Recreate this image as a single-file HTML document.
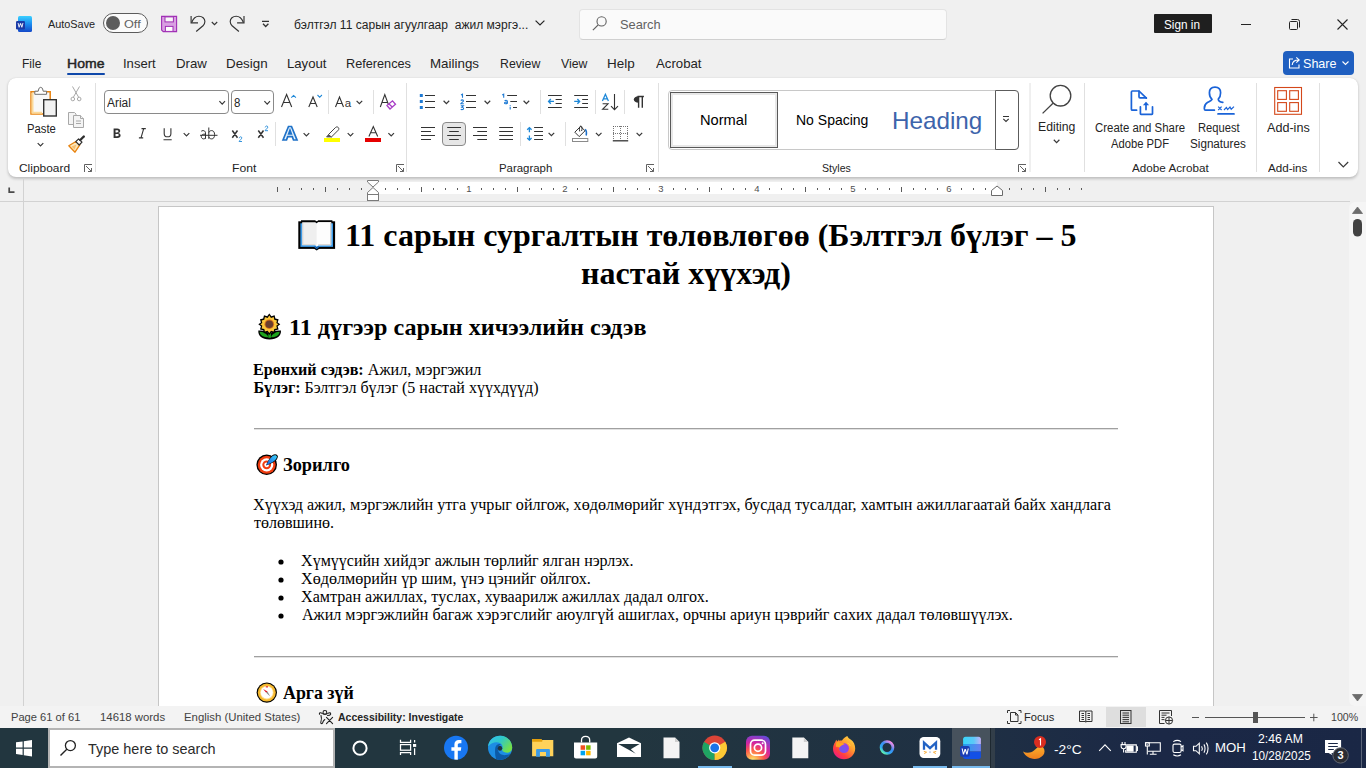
<!DOCTYPE html>
<html><head><meta charset="utf-8">
<style>
*{box-sizing:border-box;margin:0;padding:0}
html,body{width:1366px;height:768px;overflow:hidden;background:#f0f0f0;font-family:"Liberation Sans",sans-serif;color:#242424;position:relative}
.a{position:absolute}
.t{position:absolute;white-space:pre;line-height:1;transform-origin:0 0}
svg{position:absolute;overflow:visible}
.d{position:absolute;white-space:pre;line-height:1;font-family:"Liberation Serif",serif;color:#000}

</style></head><body>

<!-- titlebar -->
<!-- word icon -->
<svg style="left:16px;top:16px" width="16" height="16" viewBox="0 0 16 16">
  <defs><linearGradient id="wg" x1="0" y1="0" x2="0" y2="1"><stop offset="0" stop-color="#3bd0ff"/><stop offset="0.5" stop-color="#1a8cf0"/><stop offset="1" stop-color="#1448c8"/></linearGradient></defs>
  <rect x="2" y="0" width="14" height="16" rx="1.5" fill="url(#wg)"/>
  <rect x="0" y="5" width="9" height="8.5" rx="1.2" fill="#1b3aa6"/>
  <path d="M1.6 7L2.7 11.6H3.5L4.5 8.6L5.5 11.6H6.3L7.4 7H6.5L5.9 10L5 7.2H4L3.1 10L2.5 7Z" fill="#fff"/>
</svg>
<!-- autosave toggle -->
<div class="a" style="left:103px;top:13px;width:45px;height:20px;border:1.2px solid #5c5c5c;border-radius:10px;background:#fbfbfb"></div>
<div class="a" style="left:106px;top:16px;width:14px;height:14px;border-radius:7px;background:#5c5c5c"></div>
<!-- save -->
<svg style="left:0;top:0" width="1366" height="768" viewBox="0 0 1366 768">
  <path d="M161.6 16.4H176.6V31.6H163.2L161.6 30Z" fill="#d9a0e2" stroke="#a02fb5" stroke-width="1.1"/>
  <rect x="165" y="16.9" width="8.4" height="5" fill="#f8f8f8" stroke="#a02fb5" stroke-width="1"/>
  <rect x="165.4" y="26.4" width="7.6" height="5" fill="#fff" stroke="#a02fb5" stroke-width="1"/>
  <g fill="none" stroke="#333" stroke-width="1.15">
   <path d="M191.1 16V22.8H198"/>
   <path d="M191.8 22.2C193.2 18.6 195.8 16.2 198.9 16.2C202.3 16.2 204.9 18.6 204.9 21.6C204.9 23.2 204.3 24.5 203 25.8L196.2 31.5"/>
   <path d="M211.8 22L214.5 24.6L217.2 22"/>
   <path d="M244 16V22.8H237.1"/>
   <path d="M243.3 22.2C241.9 18.6 239.3 16.2 236.2 16.2C232.8 16.2 230.2 18.6 230.2 21.6C230.2 23.2 230.8 24.5 232.1 25.8L238.9 31.5"/>
   <path d="M262 21.4H269M263 23.7L265.7 26.5L268.4 23.7" stroke-width="1.25"/>
  </g>
</svg>
<!-- title chevron -->
<svg style="left:535px;top:20px" width="10" height="6" viewBox="0 0 10 6"><path d="M0.6 0.6L5 5L9.4 0.6" fill="none" stroke="#242424" stroke-width="1.2"/></svg>
<!-- search box -->
<div class="a" style="left:579px;top:9px;width:368px;height:31px;background:#fafafa;border:1px solid #e3e3e3;border-bottom-color:#d0d0d0;border-radius:4px"></div>
<svg style="left:592px;top:16px" width="15" height="15" viewBox="0 0 15 15"><circle cx="9.6" cy="5.4" r="4.6" fill="none" stroke="#5f5f5f" stroke-width="1.1"/><path d="M6.2 8.8L0.9 14.1" stroke="#5f5f5f" stroke-width="1.2"/></svg>
<!-- sign in -->
<div class="a" style="left:1154px;top:14px;width:58px;height:19px;background:#1f1f1f;border-radius:1px"></div>
<!-- window controls -->
<div class="a" style="left:1241px;top:24px;width:10px;height:1px;background:#242424"></div>
<svg style="left:1289px;top:19px" width="11" height="11" viewBox="0 0 11 11"><rect x="0.5" y="2.5" width="8" height="8" rx="1" fill="none" stroke="#242424"/><path d="M2.5 0.5H8.5Q10.5 0.5 10.5 2.5V8.5" fill="none" stroke="#242424"/></svg>
<svg style="left:1337px;top:19px" width="11" height="11" viewBox="0 0 11 11"><path d="M0.5 0.5L10.5 10.5M10.5 0.5L0.5 10.5" stroke="#242424" stroke-width="1.1"/></svg>
<!-- home underline -->
<div class="a" style="left:67px;top:73px;width:38px;height:2px;background:#0f48aa;border-radius:1px"></div>
<!-- share button -->
<div class="a" style="left:1283px;top:51px;width:71px;height:24px;background:#1f5fc0;border-radius:4px"></div>
<svg style="left:1288px;top:56px" width="14" height="13" viewBox="0 0 14 13"><path d="M5 3H1.5V12H11V8.5" fill="none" stroke="#fff" stroke-width="1.1"/><path d="M4.2 9C4.5 5.8 7 4 10.5 4M8.3 1.3L11.2 4L8.3 6.7" fill="none" stroke="#fff" stroke-width="1.1"/></svg>
<svg style="left:1342px;top:61px" width="7" height="5" viewBox="0 0 7 5"><path d="M0.5 0.5L3.5 3.5L6.5 0.5" fill="none" stroke="#fff" stroke-width="1.1"/></svg>

<!-- ribbon -->
<div class="a" style="left:8px;top:78px;width:1350px;height:99px;background:#fff;border-radius:8px;box-shadow:0 1.5px 3px rgba(0,0,0,0.2),0 0 1px rgba(0,0,0,0.1)"></div>
<!-- font boxes -->
<div class="a" style="left:104px;top:90px;width:125px;height:24px;border:1px solid #8a8a8a;border-radius:4px;background:#fff"></div>
<div class="a" style="left:231px;top:90px;width:43px;height:24px;border:1px solid #8a8a8a;border-radius:4px;background:#fff"></div>
<!-- styles gallery -->
<div class="a" style="left:668px;top:90px;width:351px;height:60px;border:1px solid #c8c8c8;border-radius:4px;background:#fff"></div>
<div class="a" style="left:670px;top:92px;width:108px;height:56px;border:1px solid #595959;background:#fff"></div>
<div class="a" style="left:671px;top:93px;width:106px;height:54px;border:2px solid #e8e8e8"></div>
<div class="a" style="left:995px;top:90px;width:24px;height:60px;border:1px solid #5c5c5c;border-radius:0 4px 4px 0;background:#fff"></div>
<!-- center align selected -->
<div class="a" style="left:442px;top:122px;width:24px;height:24px;border:1px solid #8a8a8a;border-radius:4px;background:#e6e6e6"></div>
<svg style="left:0;top:0" width="1366" height="768" viewBox="0 0 1366 768">
<g fill="none" stroke-linecap="butt">
 <!-- group separators -->
 <g stroke="#e0e0e0" stroke-width="1">
  <path d="M95.5 83V172M406.5 83V172M658.5 83V172M1030 83V172M1084.5 83V172M1256.5 83V172M1319.5 83V172"/>
  <path d="M328.5 90V114M373.5 90V114M275.5 122V146M540.5 90V114M595.5 90V114M624.5 90V114M520.5 122V146M565.5 122V146"/>
 </g>
 <!-- dialog launchers -->
 <g stroke="#616161" stroke-width="1">
  <path d="M84.5 172V164.5H92M86 166L91.5 171.5M91.5 168V171.5H88"/>
  <path d="M396.5 172V164.5H404M398 166L403.5 171.5M403.5 168V171.5H400"/>
  <path d="M646.5 172V164.5H654M648 166L653.5 171.5M653.5 168V171.5H650"/>
  <path d="M1018.5 172V164.5H1026M1020 166L1025.5 171.5M1025.5 168V171.5H1022"/>
 </g>
 <!-- chevrons (small) -->
 <g stroke="#3a3a3a" stroke-width="1.2">
  <path d="M37.70 143.05L40.50 145.95L43.30 143.05M219.40 101.15L222.20 104.05L225.00 101.15M264.40 101.15L267.20 104.05L270.00 101.15M356.60 100.85L359.40 103.75L362.20 100.85M183.70 133.05L186.50 135.95L189.30 133.05M303.60 133.05L306.40 135.95L309.20 133.05M347.70 133.05L350.50 135.95L353.30 133.05M388.40 133.05L391.20 135.95L394.00 133.05M443.60 100.75L446.40 103.65L449.20 100.75M484.60 100.75L487.40 103.65L490.20 100.75M523.60 100.75L526.40 103.65L529.20 100.75M548.60 132.85L551.40 135.75L554.20 132.85M595.90 132.85L598.70 135.75L601.50 132.85M636.60 132.85L639.40 135.75L642.20 132.85M1053.80 139.75L1056.60 142.65L1059.40 139.75"/>
  <path d="M1338.5 162L1343.3 167L1348.2 162" stroke-width="1.2"/>
 </g>
 <!-- paste icon -->
 <path d="M31 91.8H50.2V114H31Z" stroke="#e8830f" stroke-width="1.5" fill="#f8f8f8"/>
 <path d="M32.5 93V112.7H42" stroke="#fbd99a" stroke-width="2"/>
 <path d="M34.8 94.3V91.2H38.2Q38.5 87.3 40.7 87.3Q42.9 87.3 43.2 91.2H46.6V94.3Z" stroke="#6e6e6e" stroke-width="1" fill="#fff"/>
 <rect x="43.7" y="99.7" width="12.6" height="16.3" stroke="#333" stroke-width="1.4" fill="#f2f2f2"/>
 <!-- scissors (disabled) -->
 <g stroke="#a8a8a8" stroke-width="1">
  <path d="M72.5 86.5L78.5 97M79.5 86.5L73.5 97"/>
  <circle cx="72.8" cy="99" r="1.8"/><circle cx="79.2" cy="99" r="1.8"/>
 </g>
 <!-- copy (disabled) -->
 <g stroke="#a8a8a8" stroke-width="1" fill="#f4f4f4">
  <path d="M68.5 124.5V112.5H74.5L76 114V124.5Z"/>
  <path d="M73.5 127.5V115.5H80.5L83.5 118.5V127.5Z"/>
  <path d="M76 121H81M76 123.5H81M80.5 115.5V118.5H83.5"/>
 </g>
 <!-- format painter -->
 <path d="M68.8 145.8L76.3 141.2L79.8 144.8L75 152.2Z" stroke="#e8830f" stroke-width="1.3" fill="#fde6b8" stroke-linejoin="round"/>
 <path d="M71.5 146.5L76.5 144.5L74.6 149.5Z" fill="#f8c070" stroke="none"/>
 <path d="M75.8 141.6L78.6 138.8L82 142.2L79.2 145Z" stroke="#2e2e2e" stroke-width="1.2" fill="#fff" stroke-linejoin="round"/>
 <path d="M80.3 140L83.8 136.5" stroke="#2e2e2e" stroke-width="2.4" stroke-linecap="round"/>
 <!-- grow / shrink font -->
 <g stroke="#333" stroke-width="1.1">
  <path d="M281.5 107L286.6 94.5L291.7 107M283.4 102.5H289.8"/>
  <path d="M308.8 107L313 97L317.2 107M310.3 103.5H315.7"/>
  <path d="M335.5 107L339.5 97L343.5 107M337 103.5H342"/>
  <path d="M380.3 107L384.8 94.5L389.3 107M382 102.5H387.5"/>
 </g>
 <path d="M291.3 97.6L293.6 95.4L295.9 97.6M317.5 95L319.7 97.3L321.9 95" stroke="#1e88d8" stroke-width="1.1"/>
 <text x="344.8" y="107" font-family="Liberation Sans" font-size="11.5" fill="#333" stroke="none">a</text>
 <path d="M387 105.5L392.5 100.8L395.5 104.2L390 109Z M389 104L392.5 107.3" stroke="#a83ec6" stroke-width="1.3" fill="#fff"/>
 <!-- B I U ab x2 x^2 -->
 <path d="M113.6 128.6H117.2C119.4 128.6 120.2 129.8 120.2 131C120.2 132.2 119.3 132.9 118 133.1C119.6 133.3 120.6 134.2 120.6 135.6C120.6 137.1 119.4 137.9 117.4 137.9H113.6Z M115.5 130.2V132.5H116.9C118 132.5 118.4 132 118.4 131.3C118.4 130.6 118 130.2 116.9 130.2Z M115.5 134V136.3H117.1C118.3 136.3 118.8 135.8 118.8 135.1C118.8 134.4 118.3 134 117.1 134Z" fill="#333" stroke="none" fill-rule="evenodd"/>
 <path d="M141.5 128.6H145.8M138.9 137.9H143.2M143.7 128.6L141 137.9" stroke="#333" stroke-width="1.1"/>
 <path d="M164.2 128.3V133.4C164.2 135.7 165.5 136.8 167.5 136.8C169.5 136.8 170.9 135.7 170.9 133.4V128.3M163.5 139.7H171.7" stroke="#333" stroke-width="1.1"/>
 <g stroke="#333" stroke-width="1">
  <path d="M205.5 132.8C205.5 131.3 204.2 130.6 203 130.6C202 130.6 201.4 131 201.2 131.4M205.5 132.8V138.8M205.4 134.2C203 134 201.3 134.6 201.3 136.5C201.3 138.3 202.8 138.9 203.6 138.9C204.6 138.9 205.3 138.4 205.5 137.3"/>
  <path d="M208.8 127.5V138.8M208.9 132.5C209.4 131.2 210.3 130.6 211.6 130.6C213.4 130.6 214.6 132 214.6 134.7C214.6 137.5 213.4 138.9 211.6 138.9C210.3 138.9 209.3 138.2 208.9 137"/>
  <path d="M200 135.3H217.5"/>
 </g>
 <path d="M232.3 130.5L237.5 137.8M237.5 130.5L232.3 137.8M258.3 130.5L263.5 137.8M263.5 130.5L258.3 137.8" stroke="#333" stroke-width="1.5"/>
 <path d="M239.2 138.2C239.4 137.2 240.1 136.8 240.6 136.8C241.3 136.8 241.8 137.3 241.8 137.9C241.8 139 239.5 140.3 239.1 141.5H242M265.2 127.4C265.4 126.4 266.1 126 266.6 126C267.3 126 267.8 126.5 267.8 127.1C267.8 128.2 265.5 129.5 265.1 130.7H268" stroke="#1e88d8" stroke-width="0.9"/>
 <!-- text effects A -->
 <path d="M283 140L288.5 126.5H291.5L297 140H293.5L292.3 136.7H287.7L286.5 140Z M288.7 133.8H291.3L290 130.2Z" stroke="#1f72c8" stroke-width="1.7" fill="#e4f0fb"/>
 <!-- highlighter -->
 <path d="M328.5 134.5L335.5 127.5C336.3 126.7 337.6 126.7 338.3 127.5C339 128.2 339 129.4 338.3 130.1L331.3 137.1Z" stroke="#444" stroke-width="1" fill="#fff"/>
 <path d="M328.5 134.5L326.5 137H330.8L331.3 137.1Z" fill="#555" stroke="#555" stroke-width="0.8"/>
 <rect x="324" y="138" width="16" height="4" fill="#ffff00" stroke="none"/>
 <!-- font color -->
 <path d="M368.9 136.5L373.3 126.5L377.7 136.5M370.5 132.8H376.1" stroke="#333" stroke-width="1.1"/>
 <rect x="365" y="138" width="16" height="4" fill="#e60000" stroke="none"/>
 <!-- bullets -->
 <g fill="#1e7ad4" stroke="none">
  <rect x="419.8" y="94" width="3" height="3"/><rect x="419.8" y="100" width="3" height="3"/><rect x="419.8" y="106" width="3" height="3"/>
 </g>
 <path d="M425 95.5H435M425 101.5H435M425 107.5H435" stroke="#333" stroke-width="1"/>
 <g fill="none" stroke="#1e7ad4" stroke-width="1.1">
  <path d="M461 95L462.5 94.2V97.8"/>
  <path d="M460.8 100.6C461.2 100 461.8 99.9 462.3 99.9C463 99.9 463.5 100.3 463.5 100.9C463.5 101.8 461 102.8 460.8 103.7H463.8"/>
  <path d="M460.8 105.8H463.3L461.8 107.3C463 107.3 463.6 107.8 463.6 108.4C463.6 109.1 462.9 109.6 462 109.6C461.5 109.6 461 109.4 460.8 109.1"/>
  <path d="M502.2 95L503.7 94.2V97.8"/>
  <path d="M504.7 101C505 100.4 505.5 100.2 506.1 100.2C506.9 100.2 507.4 100.6 507.4 101.4V103.8M507.3 102C505.5 101.9 504.5 102.3 504.5 103C504.5 103.5 504.9 103.8 505.5 103.8C506.3 103.8 507 103.4 507.3 102.9"/>
  <path d="M510.2 106.8V109.6M510.2 105V105.8"/>
 </g>
 <path d="M466 95.5H476M466 101.5H476M466 107.5H476" stroke="#333" stroke-width="1"/>
 <path d="M507.2 95.5H517M510.3 101.5H517M513 107.5H517" stroke="#333" stroke-width="1"/>
 <!-- decrease / increase indent -->
 <path d="M548 95.5H561.8M555.6 99.5H561.8M555.6 103.5H561.8M548 107.5H561.8" stroke="#333" stroke-width="1"/>
 <path d="M550.8 99L548.6 101.4L550.8 103.8M548.8 101.4H554" stroke="#1e88d8" stroke-width="1.4"/>
 <path d="M574.2 95.5H588M582.2 99.5H588M582.2 103.5H588M574.2 107.5H588" stroke="#333" stroke-width="1"/>
 <path d="M574.2 101.4H579.6M577.4 99L579.6 101.4L577.4 103.8" stroke="#1e88d8" stroke-width="1.4"/>
 <!-- sort -->
 <path d="M602.4 101L605.4 94.3L608.4 101M603.4 98.9H607.4" stroke="#1e88d8" stroke-width="1.3" fill="none"/>
 <path d="M602.6 103.8H608L602.6 109.3H608.3" stroke="#333" stroke-width="1.1" fill="none"/>
 <path d="M614.5 94V109.6M611 106.2L614.5 109.7L618 106.2" stroke="#333" stroke-width="1.1" fill="none"/>
 <!-- pilcrow -->
 <path d="M638.6 96.5V107.7M642.3 96.5V107.7M643.9 96.5H637.5" stroke="#333" stroke-width="1.4" fill="none"/>
 <path d="M638.6 96.3V102.7C635.8 102.7 633.8 101.3 633.8 99.5C633.8 97.6 635.6 96.3 638.6 96.3Z" fill="#333" stroke="none"/>
 <!-- align -->
 <g stroke="#333" stroke-width="1">
  <path d="M421 127.5H435M421 131.5H431M421 135.5H435M421 139.5H431"/>
  <path d="M447.2 127.5H461M449.2 131.5H458.8M447.2 135.5H461M449.2 139.5H458.8"/>
  <path d="M473 127.5H487M477.3 131.5H487M473 135.5H487M477.3 139.5H487"/>
  <path d="M499.2 127.5H513M499.2 131.5H513M499.2 135.5H513M499.2 139.5H513"/>
 </g>
 <!-- line spacing -->
 <path d="M534.1 127.5H543M534.1 131.5H543M534.1 135.5H543M534.1 139.5H543" stroke="#333" stroke-width="1"/>
 <path d="M529.4 127.6V132.3M529.4 135.5V140.2M527.2 129.8L529.4 127.6L531.6 129.8M527.2 138L529.4 140.2L531.6 138" stroke="#1e88d8" stroke-width="1.3" fill="none"/>
 <!-- shading -->
 <path d="M574.8 132.2L580.6 126.4L585 130.8L579.2 136.6Z" stroke="#333" stroke-width="1" fill="#fff" stroke-linejoin="round"/>
 <path d="M579.8 131.5C579 129.5 579.4 126 580.8 126C582.2 126 582.4 128.5 581.6 131" stroke="#333" stroke-width="1" fill="none"/>
 <path d="M585.2 129.2C586.3 130.3 586.8 132.5 586.2 135.5" stroke="#1e6fc8" stroke-width="1.5" fill="none"/>
 <rect x="572.5" y="138.5" width="15.3" height="3" stroke="#8a8a8a" stroke-width="1" fill="#fff"/>
 <!-- borders -->
 <g stroke="#555" stroke-width="0.8" stroke-dasharray="1 1">
  <path d="M613 126.5H628M613 133.5H628M613.5 126V140M620.5 126V140M627.5 126V140"/>
 </g>
 <path d="M612.8 140.8H628.2" stroke="#333" stroke-width="1.3"/>
 <!-- styles more button -->
 <path d="M1003 116.5H1009M1003.3 118.8L1006 121.5L1008.7 118.8" stroke="#333" stroke-width="1.1"/>
 <!-- editing magnifier -->
 <circle cx="1060.5" cy="95.7" r="10.3" stroke="#424242" stroke-width="1.3"/>
 <path d="M1053 103.2L1042.6 113.4" stroke="#424242" stroke-width="1.3"/>
 <!-- create and share PDF -->
 <g stroke="#1a63d8" stroke-width="1.7" stroke-linejoin="round" stroke-linecap="round" fill="none">
  <path d="M1136.6 110.2H1132.4C1131.8 110.2 1131.4 109.8 1131.4 109.2V92C1131.4 91.4 1131.8 91 1132.4 91H1139L1146.4 98.2"/>
  <path d="M1139 91.2V96.8C1139 97.4 1139.4 97.8 1140 97.8H1146.2"/>
  <path d="M1140.4 106.8V113.8C1140.4 114.2 1140.6 114.4 1141 114.4H1151.9C1152.3 114.4 1152.5 114.2 1152.5 113.8V106.8"/>
  <path d="M1146 109.6V103.6"/>
 </g>
 <path d="M1142.9 105.2L1146 101.8L1149.1 105.2Z" fill="#1a63d8"/>
 <!-- request signatures -->
 <g stroke="#1a63d8" stroke-width="1.7" stroke-linecap="round" fill="none">
  <path d="M1212 99.3C1210.2 97.9 1209.4 95.5 1209.4 92.8C1209.4 89.3 1211.6 87.1 1215 87.1C1218.4 87.1 1220.6 89.3 1220.6 92.8C1220.6 95.5 1219.9 97.7 1218.3 99.2C1218.4 100.9 1220.5 102.1 1222.8 102.4M1212 99.3C1211.2 101 1208.8 101.8 1207.4 102.6C1205.3 103.8 1204.3 106 1204.3 108.5C1204.3 109.6 1204.8 110.2 1205.6 110.2H1214.4"/>
  <path d="M1218 113.9H1234"/>
 </g>
 <path d="M1218.2 106.6L1221.6 110M1221.6 106.6L1218.2 110M1224 110L1226.4 107.4L1227.6 109.6L1230 107L1231.2 109.2L1234 106.6" stroke="#1a63d8" stroke-width="1.2" fill="none"/>
 <!-- add-ins -->
 <g stroke="#d4481a" stroke-width="1.1">
 <rect x="1274.7" y="87.5" width="26.8" height="26.8"/>
 <rect x="1277.7" y="90.7" width="8.7" height="8.7"/>
 <rect x="1289.7" y="90.7" width="8.7" height="8.7"/>
 <rect x="1277.7" y="102.6" width="8.7" height="8.7"/>
 <rect x="1289.7" y="102.6" width="8.7" height="8.7"/>
 </g>
</g>
</svg>

<!-- ruler -->
<div class="a" style="left:0;top:201px;width:1350px;height:1px;background:#d2d2d2"></div>
<div class="a" style="left:23px;top:178px;width:1px;height:528px;background:#d2d2d2"></div>
<div class="a" style="left:373px;top:182px;width:624px;height:12px;background:#fff"></div>
<svg style="left:0;top:0" width="1366" height="768" viewBox="0 0 1366 768"><path d="M9.2 187.5V192.2H14.5" fill="none" stroke="#4a4a4a" stroke-width="1.7"/>
<path d="M277.5 187V192M289.5 188V190M301.5 188V190M313.5 188V190M325.5 187V192M337.5 188V190M349.5 188V190M361.5 188V190M385.5 188V190M397.5 188V190M409.5 188V190M421.5 187V192M433.5 188V190M445.5 188V190M457.5 188V190M481.5 188V190M493.5 188V190M505.5 188V190M517.5 187V192M529.5 188V190M541.5 188V190M553.5 188V190M577.5 188V190M589.5 188V190M601.5 188V190M613.5 187V192M625.5 188V190M637.5 188V190M649.5 188V190M673.5 188V190M685.5 188V190M697.5 188V190M709.5 187V192M721.5 188V190M733.5 188V190M745.5 188V190M769.5 188V190M781.5 188V190M793.5 188V190M805.5 187V192M817.5 188V190M829.5 188V190M841.5 188V190M865.5 188V190M877.5 188V190M889.5 188V190M901.5 187V192M913.5 188V190M925.5 188V190M937.5 188V190M961.5 188V190M973.5 188V190M985.5 188V190M1009.5 188V190M1021.5 188V190M1033.5 188V190M1045.5 187V192M1057.5 188V190M1069.5 188V190M1081.5 188V190" stroke="#5a5a5a" stroke-width="1" fill="none"/>
<path d="M367.5 180.5H378.5V182L373 187L367.5 182Z" fill="#fff" stroke="#7a7a7a" stroke-width="1"/>
<path d="M373 187.5L378.5 192.5V194.5H367.5V192.5Z" fill="#fff" stroke="#7a7a7a" stroke-width="1"/>
<rect x="367.5" y="194.5" width="11" height="6" fill="#fff" stroke="#7a7a7a" stroke-width="1"/>
<path d="M991.5 195.5V190.5L997 186L1002.5 190.5V195.5Z" fill="#fff" stroke="#6a6a6a" stroke-width="1"/>
<text x="469" y="192" font-family="Liberation Sans" font-size="9.5" fill="#505050" text-anchor="middle">1</text>
<text x="565" y="192" font-family="Liberation Sans" font-size="9.5" fill="#505050" text-anchor="middle">2</text>
<text x="661" y="192" font-family="Liberation Sans" font-size="9.5" fill="#505050" text-anchor="middle">3</text>
<text x="757" y="192" font-family="Liberation Sans" font-size="9.5" fill="#505050" text-anchor="middle">4</text>
<text x="853" y="192" font-family="Liberation Sans" font-size="9.5" fill="#505050" text-anchor="middle">5</text>
<text x="949" y="192" font-family="Liberation Sans" font-size="9.5" fill="#505050" text-anchor="middle">6</text>
</svg>
<!-- doc -->
<!-- page -->
<div class="a" style="left:158px;top:206px;width:1056px;height:500px;background:#fff;border:1px solid #c6c6c6;border-bottom:none"></div>
<!-- scrollbar -->
<div class="a" style="left:1349px;top:202px;width:17px;height:504px;background:#f5f5f5;border-radius:6px 0 0 6px"></div>
<svg style="left:0;top:0" width="1366" height="768" viewBox="0 0 1366 768">
 <path d="M1357.5 207L1362.5 213.5H1352.5Z" fill="#6b6b6b" stroke="#6b6b6b" stroke-width="0.8" stroke-linejoin="round"/>
 <rect x="1353" y="219" width="9" height="17.5" rx="4.5" fill="#424242"/>
 <path d="M1357.5 701L1362.5 694.5H1352.5Z" fill="#6b6b6b" stroke="#6b6b6b" stroke-width="0.8" stroke-linejoin="round"/>
 <!-- horizontal rules -->
 <rect x="254" y="428" width="864" height="1" fill="#a0a0a0"/><rect x="254" y="429" width="864" height="1" fill="#e2e2e2"/>
 <rect x="254" y="656" width="864" height="1" fill="#a0a0a0"/><rect x="254" y="657" width="864" height="1" fill="#e2e2e2"/>
 <!-- bullets -->
 <circle cx="281" cy="562" r="2.6" fill="#000"/>
 <circle cx="281" cy="580" r="2.6" fill="#000"/>
 <circle cx="281" cy="598" r="2.6" fill="#000"/>
 <circle cx="281" cy="616" r="2.6" fill="#000"/>
 <!-- book emoji -->
 <g>
  <rect x="298.3" y="221.3" width="36.8" height="27.6" fill="#000"/>
  <path d="M301 220.2H315.2L316.7 221.8L318.2 220.2H332.4V223H301Z" fill="#000"/>
  <path d="M313 248L316.7 250.4L320.4 248Z" fill="#000"/>
  <rect x="300.4" y="223.3" width="32.6" height="23.6" fill="#3c9be8"/>
  <path d="M302.2 222.3H315.3L316.7 223.6L318.1 222.3H331.2V245.3H318.3L316.7 246.6L315.1 245.3H302.2Z" fill="#efefef"/>
  <path d="M316.7 223.6V246.6L318.3 245.3H331.2V222.3H318.1Z" fill="#fdfdfd"/>
  <path d="M302.4 244.6H315.3M318.2 244.6H331" stroke="#dcd6d0" stroke-width="1"/>
  <path d="M302.8 223V244.5M330.6 223V244.5" stroke="#cfcfcf" stroke-width="1"/>
  <path d="M314.5 246.4L316.7 248.3L318.9 246.4" stroke="#1565b8" stroke-width="1.3" fill="none"/>
 </g>
 <!-- sunflower -->
 <g>
  <path d="M258.3 330.5C258 336 262 339.5 269.5 339.5C277 339.5 281.3 336 281 330.5C276 330 272 331.5 269.5 334C267 331.5 263 330 258.3 330.5Z" fill="#000"/>
  <path d="M259.6 331.8C260 335.5 263.5 337.3 268.2 337.3C267.8 334.8 264.5 332 259.6 331.8Z" fill="#1ca31c"/>
  <path d="M279.7 331.8C279.3 335.5 275.8 337.3 271.1 337.3C271.5 334.8 274.8 332 279.7 331.8Z" fill="#1ca31c"/>
  <rect x="268.3" y="330" width="2.6" height="7.8" fill="#1ca31c"/>
  <polygon id="petal" points="269.3,313.4 271.4,316.2 274.6,315.2 275.4,318.4 278.6,319.2 277.7,322.4 280.3,324.2 277.7,326.3 278.6,329.4 275.4,330.2 274.6,333.3 271.4,332.4 269.3,335 267.2,332.4 264,333.3 263.2,330.2 260,329.4 260.9,326.3 258.3,324.2 260.9,322.4 260,319.2 263.2,318.4 264,315.2 267.2,316.2" fill="#000"/>
  <polygon points="269.3,315.6 271,318 273.7,317.1 274.3,319.8 277,320.4 276.3,323 278.3,324.2 276.3,325.8 277,328.4 274.3,329 273.7,331.6 271,330.8 269.3,333 267.6,330.8 264.9,331.6 264.3,329 261.6,328.4 262.3,325.8 260.3,324.2 262.3,323 261.6,320.4 264.3,319.8 264.9,317.1 267.6,318" fill="#fcc73a"/>
  <circle cx="269.3" cy="324.2" r="4.8" fill="#d8731c"/>
  <circle cx="269.3" cy="324.2" r="3.8" fill="#6b3e2e"/>
 </g>
 <!-- target -->
 <g>
  <circle cx="266.7" cy="464.8" r="10.3" fill="#000"/>
  <circle cx="266.7" cy="464.8" r="9" fill="#f03c10"/>
  <circle cx="266.7" cy="464.8" r="6.6" fill="#fff"/>
  <circle cx="266.7" cy="464.8" r="4.4" fill="#f03c10"/>
  <circle cx="266.7" cy="464.8" r="2.4" fill="#fff"/>
  <defs><linearGradient id="dart" x1="0" y1="1" x2="1" y2="0"><stop offset="0" stop-color="#1a5fd8"/><stop offset="0.55" stop-color="#2a9cf0"/><stop offset="1" stop-color="#3ad6fa"/></linearGradient></defs>
  <path d="M266 465.4C267.5 461.5 269.8 457.5 272.3 455.3C274.5 453.5 277.5 454 277.8 456.3C278 458.5 276.3 460.6 273.8 462.1C271.6 463.4 268.5 464.7 266 465.4Z" fill="#000"/>
  <path d="M266.4 465C268 461.3 270.2 457.8 272.6 456C274.4 454.6 276.7 455 276.9 456.6C277 458.2 275.7 460 273.4 461.4C271.4 462.6 268.6 464.3 266.4 465Z" fill="url(#dart)"/>
 </g>
 <!-- compass -->
 <g>
  <circle cx="266.8" cy="692.6" r="10.2" fill="#000"/>
  <circle cx="266.8" cy="692.6" r="9" fill="#f6b930"/>
  <circle cx="266.8" cy="692.6" r="6.8" fill="#ffdf8c"/>
  <circle cx="266.8" cy="692.6" r="6" fill="#fff"/>
  <path d="M263.1 689L267.5 691.5L266.2 692.8Z" fill="#e01020"/>
  <path d="M266.2 692.8L267.5 691.5L270.3 696.5Z" fill="#8a8a8a"/>
  <rect x="265.8" y="686.3" width="2.2" height="1.1" fill="#e01020"/>
 </g>
</svg>

<!-- status -->
<div class="a" style="left:0;top:706px;width:1366px;height:22px;background:#f3f3f3"></div>
<div class="a" style="left:1106px;top:707px;width:40px;height:20px;background:#dedede"></div>
<svg style="left:0;top:0" width="1366" height="768" viewBox="0 0 1366 768">
 <!-- accessibility -->
 <g fill="none" stroke="#222" stroke-width="1.1" stroke-linecap="round">
  <circle cx="324.9" cy="712.4" r="1.9"/>
  <path d="M319.5 714.2C319 712.8 320.8 712.2 322 713.4C323.5 714.3 326.5 714.3 328 713.4C329.2 712.2 331.2 712.8 330.5 714.5C330.2 715.3 329 715.5 327.5 715.5"/>
  <path d="M321 715.5C321.8 717.5 321.5 720 320.8 722.3C320.5 723.8 322 724 322.5 723C323 721.5 323.5 720.5 324.8 719.5"/>
  <path d="M326.5 717.3L332.6 723.6M332.6 717.3L326.5 723.6"/>
 </g>
 <!-- focus -->
 <g fill="none" stroke="#333" stroke-width="1">
  <path d="M1007.5 713V710.5H1010M1018.5 710.5H1021V713M1021 721V723.5H1018.5M1010 723.5H1007.5V721"/>
  <path d="M1010.5 712.5H1015.5L1018 715V721.5H1010.5Z"/>
  <path d="M1015.5 712.5V715H1018"/>
 </g>
 <!-- read mode -->
 <g fill="none" stroke="#333" stroke-width="1">
  <path d="M1079.5 711V721.5H1085.5L1085.8 722.3L1086.1 721.5H1092V711H1086.1L1085.8 711.8L1085.5 711H1079.5Z"/>
  <path d="M1085.8 711.8V721.5M1081.5 713.5H1084M1081.5 715.5H1084M1081.5 717.5H1084M1081.5 719.5H1084M1087.5 713.5H1090M1087.5 715.5H1090M1087.5 717.5H1090M1087.5 719.5H1090"/>
 </g>
 <!-- print layout -->
 <g fill="none" stroke="#333" stroke-width="1">
  <rect x="1120.5" y="710.5" width="10.5" height="13"/>
  <path d="M1122.5 713H1129M1122.5 715.2H1129M1122.5 717.4H1129M1122.5 719.6H1129M1122.5 721.8H1129"/>
 </g>
 <!-- web layout -->
 <g fill="none" stroke="#333" stroke-width="1">
  <path d="M1164.5 723.5H1159.5V710.5H1171.5V716"/>
  <path d="M1161.5 713H1169.5M1161.5 715.2H1166.5M1161.5 717.4H1164.5M1161.5 719.6H1164.5"/>
  <circle cx="1169" cy="720.5" r="3.6"/>
  <path d="M1165.4 720.5H1172.6M1169 716.9V724.1"/>
 </g>
 <!-- zoom slider -->
 <path d="M1192 717.5H1199M1205 717.5H1305M1310 717.5H1317.6M1313.8 713.7V721.3" stroke="#555" stroke-width="1"/>
 <rect x="1253" y="712" width="5" height="11" fill="#555"/>
</svg>

<!-- taskbar -->
<div class="a" style="left:0;top:728px;width:1366px;height:40px;background:linear-gradient(90deg,#22363f 0%,#22363f 45%,#1f3043 70%,#1b2846 85%,#1a2745 100%)"></div>
<!-- search box -->
<div class="a" style="left:48px;top:728px;width:287px;height:40px;background:#fff;border:2px solid #b4b4b4;border-right-width:2px"></div>
<!-- word highlight -->
<div class="a" style="left:952px;top:728px;width:38px;height:40px;background:#47525d"></div>
<div class="a" style="left:990px;top:728px;width:1px;height:40px;background:#1d2830"></div><div class="a" style="left:991px;top:728px;width:4px;height:40px;background:#323e49"></div>
<!-- underlines -->
<div class="a" style="left:698px;top:766px;width:34px;height:2px;background:#76b9ed"></div>
<div class="a" style="left:913px;top:766px;width:34px;height:2px;background:#76b9ed"></div>
<div class="a" style="left:952px;top:766px;width:38px;height:2px;background:#76b9ed"></div>
<div class="a" style="left:1361px;top:728px;width:1px;height:40px;background:#5a6478"></div>
<svg style="left:0;top:0" width="1366" height="768" viewBox="0 0 1366 768">
 <!-- windows logo -->
 <path d="M16 742.3L22.6 741.4V747.6H16Z M23.8 741.2L32 740V747.6H23.8Z M16 748.8H22.6V755L16 754.1Z M23.8 748.8H32V756.4L23.8 755.2Z" fill="#fff"/>
 <!-- search icon -->
 <circle cx="70.4" cy="745.6" r="5" fill="none" stroke="#222" stroke-width="1.3"/>
 <path d="M66.8 749.2L60.5 755.5" stroke="#222" stroke-width="1.4"/>
 <!-- cortana -->
 <circle cx="360" cy="748.2" r="6.6" fill="none" stroke="#fff" stroke-width="2"/>
 <!-- task view -->
 <g fill="none" stroke="#fff" stroke-width="1.25">
  <path d="M400.5 739.8V742.3H410.6V739.8"/>
  <rect x="400.5" y="744.6" width="10.1" height="5.6"/>
  <path d="M400.5 755.1V752.5H410.6V755.1"/>
  <path d="M414.6 740V742.6M414.6 748.2V755"/>
 </g>
 <rect x="413" y="744" width="3.2" height="2.9" fill="#fff"/>
 <!-- facebook -->
 <circle cx="456" cy="747.7" r="12" fill="#1877f2"/>
 <path d="M457.8 759.7V750.8H460.8L461.3 747.2H457.8V745C457.8 744 458.2 743.2 459.6 743.2H461.4V740.1C461 740 460 739.9 458.8 739.9C456.2 739.9 454.4 741.5 454.4 744.4V747.2H451.4V750.8H454.4V759.6Z" fill="#fff"/>
 <!-- edge -->
 <defs>
  <linearGradient id="edg" x1="0" y1="0" x2="1" y2="1"><stop offset="0" stop-color="#35c1f1"/><stop offset="0.55" stop-color="#1d8fd8"/><stop offset="1" stop-color="#0c59a4"/></linearGradient>
  <linearGradient id="edg2" x1="0" y1="0" x2="1" y2="0.6"><stop offset="0" stop-color="#36c0f2"/><stop offset="0.5" stop-color="#2fc8c8"/><stop offset="1" stop-color="#74e048"/></linearGradient>
  <radialGradient id="ig" cx="0.28" cy="1.05" r="1.25"><stop offset="0" stop-color="#fdf497"/><stop offset="0.12" stop-color="#fdc45a"/><stop offset="0.38" stop-color="#fd5949"/><stop offset="0.6" stop-color="#d6249f"/><stop offset="0.95" stop-color="#5a4ee0"/></radialGradient>
  <linearGradient id="ff" x1="0" y1="0" x2="0" y2="1"><stop offset="0" stop-color="#ffbd4f"/><stop offset="0.5" stop-color="#ff7139"/><stop offset="1" stop-color="#e31587"/></linearGradient>
  <linearGradient id="ring" x1="0.85" y1="0.05" x2="0.15" y2="0.95"><stop offset="0" stop-color="#f48ae6"/><stop offset="0.4" stop-color="#3a8cf2"/><stop offset="0.75" stop-color="#2fa8f0"/><stop offset="1" stop-color="#60f0b0"/></linearGradient>
  <linearGradient id="moon" x1="0" y1="0" x2="0" y2="1"><stop offset="0" stop-color="#fdb62f"/><stop offset="1" stop-color="#f07f1d"/></linearGradient>
  <linearGradient id="wd" x1="0" y1="0" x2="0" y2="1"><stop offset="0" stop-color="#3bd0ff"/><stop offset="0.5" stop-color="#1a8cf0"/><stop offset="1" stop-color="#1448c8"/></linearGradient>
 </defs>
 <circle cx="500.1" cy="747.8" r="12.1" fill="#1d8de4"/>
 <path d="M488.1 746.5C488.6 740.2 493.8 735.7 500.1 735.7C506.8 735.7 512.2 741 512.2 747.6C512.2 750.6 510.4 752.7 507.4 752.7C504.8 752.7 502.8 751.7 502 749.9C503.2 747.8 502.8 744.8 500.3 743.3C497.2 741.5 491.8 742 488.1 746.5Z" fill="url(#edg2)"/>
 <path d="M495.4 747.2C496.3 744.6 498.8 743.5 501 744.3C498.4 745.5 497.4 748.6 498.4 751.6C499.9 755.6 505.4 756.2 510.2 753.6C508.2 757.6 504.2 759.9 500.1 759.9C498 759.9 496.7 759.4 496 758.9C494.9 755 494.8 750.6 495.4 747.2Z" fill="#0c5aa6"/>
 <ellipse cx="500" cy="748.2" rx="2.2" ry="2.5" fill="#1e3440"/>
 <!-- explorer -->
 <path d="M532.1 739.6Q532.1 739 532.7 739H541L542 740H553.3V756.2H532.1Z" fill="#ffd25a"/>
 <path d="M532.1 739.6Q532.1 739 532.7 739H541L542.2 740.2V741.8H532.1Z" fill="#e5a00c"/>
 <path d="M536.1 756.8V750Q536.1 749 537.1 749H548.9Q549.9 749 549.9 750V756.8H546V752H539.9V756.8Z" fill="#3b9be8"/>
 <!-- store -->
 <path d="M574 742.5H597.2V756.5C597.2 757.7 596.5 758.5 595.2 758.5H576C574.7 758.5 574 757.7 574 756.5Z" fill="#fff"/>
 <path d="M581.5 742.5V740.2C581.5 737.8 583.3 736.3 585.6 736.3C587.9 736.3 589.7 737.8 589.7 740.2V742.5" fill="none" stroke="#fff" stroke-width="1.3"/>
 <rect x="580.6" y="745.3" width="4.5" height="4.5" fill="#f25022"/><rect x="586.1" y="745.3" width="4.5" height="4.5" fill="#7fba00"/>
 <rect x="580.6" y="750.8" width="4.5" height="4.5" fill="#00a4ef"/><rect x="586.1" y="750.8" width="4.5" height="4.5" fill="#ffb900"/>
 <!-- mail -->
 <path d="M617 743.3L629 737.6L641 743.3V757H617Z" fill="#fff"/>
 <path d="M618.2 744.1H639.6L630.8 749.2L635.8 753.8L629.5 750.2Z" fill="#22363f"/>
 <!-- files -->
 <path d="M663.5 737.5H675L679.5 742V758.2H663.5Z" fill="#f4f4f4"/>
 <path d="M675 737.5V742H679.5" fill="#cfcfcf"/>
 <path d="M792.3 737.5H803.8L808.3 742V758.2H792.3Z" fill="#f4f4f4"/>
 <path d="M803.8 737.5V742H808.3" fill="#cfcfcf"/>
 <!-- chrome -->
 <circle cx="714.7" cy="747.8" r="12.2" fill="#db4437"/>
 <path d="M714.7 747.8L704.1 741.7A12.2 12.2 0 0 0 714.7 760Z" fill="#1fa463"/>
 <path d="M714.7 747.8L714.7 760A12.2 12.2 0 0 0 725.3 741.7Z" fill="#fcc934"/>
 <path d="M714.7 747.8L704.1 741.7L710 743.3Z" fill="#db4437"/>
 <circle cx="714.7" cy="747.8" r="5.6" fill="#fff"/>
 <circle cx="714.7" cy="747.8" r="4.4" fill="#1a73e8"/>
 <!-- instagram -->
 <rect x="746" y="735.7" width="24" height="24" rx="6" fill="url(#ig)"/>
 <rect x="750.5" y="740.2" width="15" height="15" rx="4.2" fill="none" stroke="#fff" stroke-width="1.7"/>
 <circle cx="758" cy="747.7" r="3.6" fill="none" stroke="#fff" stroke-width="1.7"/>
 <circle cx="762.6" cy="743.2" r="1" fill="#fff"/>
 <!-- firefox -->
 <defs><linearGradient id="ffr" x1="1" y1="0" x2="0.2" y2="1"><stop offset="0" stop-color="#ffe94d"/><stop offset="0.4" stop-color="#ffa02e"/><stop offset="0.75" stop-color="#ff3f3f"/><stop offset="1" stop-color="#f0148a"/></linearGradient>
 <radialGradient id="ffg" cx="0.4" cy="0.6" r="0.7"><stop offset="0" stop-color="#6a5cf0"/><stop offset="1" stop-color="#a03ae8"/></radialGradient></defs>
 <path d="M835.2 742C833.8 744 833 746.3 833 748.8C833 755 838 759.3 844 759.3C850.3 759.3 855.2 754.5 855.2 748.5C855.2 744.5 853.5 741.5 851 739.8C849.5 738.8 848 738 847.3 736C845.5 736.6 843.3 738.5 842 740.5C840.8 740.3 839.6 740.5 838.8 740.8L838.8 739.6L837.4 741.5L836.2 739.8Z" fill="url(#ffr)"/>
 <circle cx="844" cy="748.2" r="4.9" fill="url(#ffg)"/>
 <path d="M836.5 742.2L838.8 741.3L840 743.2C841.8 742.8 843.6 743.2 844.6 744.2C842.4 744.6 840.6 745.8 839.7 747.5C838.2 746.6 837 746.6 836 746.9C835.8 745.2 836 743.5 836.5 742.2Z" fill="#ffa51f"/>
 <path d="M847.5 743.2C849 743.5 850 744.8 850.2 746" stroke="#ffd34a" stroke-width="0.8" fill="none"/>
 <!-- ring app -->
 <circle cx="887" cy="747.5" r="5.9" fill="none" stroke="url(#ring)" stroke-width="2.8"/>
 <!-- M app -->
 <rect x="919.5" y="737" width="20.8" height="21" rx="4.2" fill="#fff"/>
 <path d="M924 749.8V742.6L930 748.2L936 742.6V749.8" fill="none" stroke="#2262c4" stroke-width="2.3" stroke-linejoin="miter"/>
 <path d="M923.8 751.4L926.6 752.2L924.2 753.6M936.2 751.4L933.4 752.2L935.8 753.6" fill="none" stroke="#f6a62a" stroke-width="0.9"/>
 <rect x="929.3" y="751.6" width="1.4" height="0.9" fill="#6a8ad0"/>
 <!-- word taskbar -->
 <defs><linearGradient id="wt1" x1="0" y1="0" x2="1" y2="0"><stop offset="0" stop-color="#38d6fa"/><stop offset="0.6" stop-color="#5cc8f8"/><stop offset="1" stop-color="#c4b0f8"/></linearGradient>
 <linearGradient id="wt2" x1="0" y1="0" x2="1" y2="0"><stop offset="0" stop-color="#1ea0ee"/><stop offset="1" stop-color="#6a80f0"/></linearGradient></defs>
 <path d="M963.1 739.2Q963.1 736.7 965.6 736.7H978.4Q980.9 736.7 980.9 739.2V744H963.1Z" fill="url(#wt1)"/>
 <rect x="963.1" y="744" width="17.8" height="7.5" fill="url(#wt2)"/>
 <path d="M963.1 751.5H980.9V756.5Q980.9 759 978.4 759H965.6Q963.1 759 963.1 756.5Z" fill="#1450e6"/>
 <rect x="960.1" y="746" width="9.7" height="10.7" rx="1.8" fill="#1b3db4"/>
 <path d="M961.6 748.6L962.9 754.6H964L965.2 750.8L966.4 754.6H967.5L968.8 748.6H967.7L966.9 752.5L965.8 748.9H964.6L963.5 752.5L962.7 748.6Z" fill="#fff"/>
 <!-- weather moon -->
 <path d="M1040 744.5C1046 748 1046.5 755 1039 758.2C1032 760.5 1025.5 757 1023 751.5C1026.5 753.5 1031 753 1034 750.5C1037 748 1038.5 746.5 1040 744.5Z" fill="url(#moon)"/>
 <circle cx="1040" cy="742.1" r="6" fill="#d92d20"/>
 <path d="M1039 739.8L1040.5 738.8V745.4" fill="none" stroke="#fff" stroke-width="1.1"/>
 <!-- tray -->
 <g fill="none" stroke="#fff" stroke-width="1.1">
  <path d="M1099.2 750.8L1105 744.8L1110.8 750.8"/>
  <path d="M1122.2 742V744.3M1125 742V744.3M1121.1 744.6H1126.1V746.3C1126.1 747.8 1125 748.8 1123.6 748.8C1122.2 748.8 1121.1 747.8 1121.1 746.3Z M1123.6 748.8V752.6"/>
  <path d="M1126.8 744.9H1136.3V752.3H1125.7V750"/>
  <path d="M1136.3 746.8H1137.4V750.4H1136.3"/>
  <path d="M1145.5 742.7H1160.3V751.3H1148"/>
  <path d="M1153 751.3V754.2M1149.8 754.3H1156.6M1147.3 746V754.6"/>
  <rect x="1145.5" y="742.7" width="3.8" height="3.3"/>
  <path d="M1173 745.6V751C1173 752 1173.6 752.5 1174.5 752.5H1179.6C1180.5 752.5 1181.1 752 1181.1 751V745.6C1181.1 744.6 1180.5 744.1 1179.6 744.1H1174.5C1173.6 744.1 1173 744.6 1173 745.6Z M1181.1 747L1183 745.8V750.8L1181.1 749.6"/>
  <path d="M1173.3 741.6C1175.6 740.2 1178.8 740.2 1181 741.6M1173.3 754.8C1175.6 756.2 1178.8 756.2 1181 754.8"/>
  <path d="M1193.5 746.3H1196L1199.3 743.2V753.8L1196 750.7H1193.5Z"/>
  <path d="M1201.6 746.2C1202.4 747.6 1202.4 749.4 1201.6 750.8M1203.9 744.4C1205.4 746.6 1205.4 750.4 1203.9 752.6M1206.3 742.6C1208.6 745.8 1208.6 751.2 1206.3 754.4"/>
 </g>
 <rect x="1126.4" y="745.5" width="7.2" height="6.2" fill="#fff"/>
 <path d="M1146.3 743.8L1147.4 744.9L1148.5 743.8" stroke="#fff" stroke-width="0.8" fill="none"/>
 <!-- notifications -->
 <path d="M1325 740H1341.1V752.9H1331.5L1332 755L1328.6 752.9H1325Z" fill="#fff"/>
 <path d="M1328.2 743.5H1337.8M1328.2 746.5H1337.8M1328.2 749.5H1333.8" stroke="#1a2745" stroke-width="1.2"/>
 <circle cx="1340.6" cy="755.4" r="7.7" fill="#2a2c32" stroke="#6a6e78" stroke-width="0.9"/>
 <text x="1340.6" y="759.3" font-family="Liberation Sans" font-size="11" font-weight="bold" fill="#fff" text-anchor="middle">3</text>
</svg>

<!-- texts -->
<div class="t" style="left:48.00px;top:19.00px;font-size:11.8px;font-weight:normal;color:#242424;font-family:'Liberation Sans';transform:scaleX(0.9216);">AutoSave</div>
<div class="t" style="left:124.43px;top:19.00px;font-size:11.8px;font-weight:normal;color:#616161;font-family:'Liberation Sans';transform:scaleX(1.0733);">Off</div>
<div class="t" style="left:294.04px;top:19.00px;font-size:12.5px;font-weight:normal;color:#242424;font-family:'Liberation Sans';transform:scaleX(0.9643);">бэлтгэл 11 сарын агуулгаар&nbsp; ажил мэргэ...</div>
<div class="t" style="left:620.05px;top:18.00px;font-size:13.5px;font-weight:normal;color:#616161;font-family:'Liberation Sans';transform:scaleX(0.9512);">Search</div>
<div class="t" style="left:1164.46px;top:19.00px;font-size:12.5px;font-weight:normal;color:#ffffff;font-family:'Liberation Sans';transform:scaleX(0.9405);">Sign in</div>
<div class="t" style="left:21.56px;top:58.00px;font-size:12.8px;font-weight:normal;color:#242424;font-family:'Liberation Sans';transform:scaleX(0.9368);">File</div>
<div class="t" style="left:66.50px;top:58.00px;font-size:12.8px;font-weight:normal;color:#242424;font-family:'Liberation Sans';transform:scaleX(1.0970);-webkit-text-stroke:0.45px #242424;">Home</div>
<div class="t" style="left:122.88px;top:58.00px;font-size:12.8px;font-weight:normal;color:#242424;font-family:'Liberation Sans';transform:scaleX(1.0194);">Insert</div>
<div class="t" style="left:175.97px;top:58.00px;font-size:12.8px;font-weight:normal;color:#242424;font-family:'Liberation Sans';transform:scaleX(1.0345);">Draw</div>
<div class="t" style="left:225.96px;top:58.00px;font-size:12.8px;font-weight:normal;color:#242424;font-family:'Liberation Sans';transform:scaleX(1.0447);">Design</div>
<div class="t" style="left:286.97px;top:58.00px;font-size:12.8px;font-weight:normal;color:#242424;font-family:'Liberation Sans';transform:scaleX(1.0270);">Layout</div>
<div class="t" style="left:346.01px;top:58.00px;font-size:12.8px;font-weight:normal;color:#242424;font-family:'Liberation Sans';transform:scaleX(0.9922);">References</div>
<div class="t" style="left:430.26px;top:58.00px;font-size:12.8px;font-weight:normal;color:#242424;font-family:'Liberation Sans';transform:scaleX(1.0435);">Mailings</div>
<div class="t" style="left:500.34px;top:58.00px;font-size:12.8px;font-weight:normal;color:#242424;font-family:'Liberation Sans';transform:scaleX(0.9610);">Review</div>
<div class="t" style="left:561.00px;top:58.00px;font-size:12.8px;font-weight:normal;color:#242424;font-family:'Liberation Sans';transform:scaleX(0.9571);">View</div>
<div class="t" style="left:606.95px;top:58.00px;font-size:12.8px;font-weight:normal;color:#242424;font-family:'Liberation Sans';transform:scaleX(1.0520);">Help</div>
<div class="t" style="left:656.30px;top:58.00px;font-size:12.8px;font-weight:normal;color:#242424;font-family:'Liberation Sans';transform:scaleX(1.0318);">Acrobat</div>
<div class="t" style="left:1303.32px;top:58.00px;font-size:12.8px;font-weight:normal;color:#ffffff;font-family:'Liberation Sans';transform:scaleX(0.9818);">Share</div>
<div class="t" style="left:26.58px;top:123.00px;font-size:12.3px;font-weight:normal;color:#242424;font-family:'Liberation Sans';transform:scaleX(0.9167);">Paste</div>
<div class="t" style="left:19.46px;top:163.00px;font-size:11.5px;font-weight:normal;color:#242424;font-family:'Liberation Sans';transform:scaleX(1.0375);">Clipboard</div>
<div class="t" style="left:107.30px;top:97.00px;font-size:12.3px;font-weight:normal;color:#242424;font-family:'Liberation Sans';transform:scaleX(0.9708);">Arial</div>
<div class="t" style="left:234.40px;top:97.00px;font-size:12.3px;font-weight:normal;color:#242424;font-family:'Liberation Sans';transform:scaleX(0.9333);">8</div>
<div class="t" style="left:231.64px;top:163.00px;font-size:11.5px;font-weight:normal;color:#242424;font-family:'Liberation Sans';transform:scaleX(1.0591);">Font</div>
<div class="t" style="left:498.81px;top:163.00px;font-size:11.5px;font-weight:normal;color:#242424;font-family:'Liberation Sans';transform:scaleX(0.9923);">Paragraph</div>
<div class="t" style="left:699.79px;top:113.00px;font-size:14.5px;font-weight:normal;color:#000000;font-family:'Liberation Sans';transform:scaleX(1.0111);">Normal</div>
<div class="t" style="left:795.83px;top:113.00px;font-size:14.5px;font-weight:normal;color:#000000;font-family:'Liberation Sans';transform:scaleX(0.9658);">No Spacing</div>
<div class="t" style="left:892.18px;top:109.00px;font-size:24px;font-weight:normal;color:#3d64ab;font-family:'Liberation Sans';transform:scaleX(1.0093);">Heading</div>
<div class="t" style="left:821.78px;top:163.00px;font-size:11.5px;font-weight:normal;color:#242424;font-family:'Liberation Sans';transform:scaleX(0.9200);">Styles</div>
<div class="t" style="left:1037.68px;top:121.00px;font-size:12px;font-weight:normal;color:#242424;font-family:'Liberation Sans';transform:scaleX(1.0200);">Editing</div>
<div class="t" style="left:1094.65px;top:122.00px;font-size:12px;font-weight:normal;color:#242424;font-family:'Liberation Sans';transform:scaleX(0.9505);">Create and Share</div>
<div class="t" style="left:1110.50px;top:138.00px;font-size:12px;font-weight:normal;color:#242424;font-family:'Liberation Sans';transform:scaleX(0.9355);">Adobe PDF</div>
<div class="t" style="left:1197.77px;top:122.00px;font-size:12px;font-weight:normal;color:#242424;font-family:'Liberation Sans';transform:scaleX(0.9318);">Request</div>
<div class="t" style="left:1190.33px;top:138.00px;font-size:12px;font-weight:normal;color:#242424;font-family:'Liberation Sans';transform:scaleX(0.9732);">Signatures</div>
<div class="t" style="left:1132.30px;top:163.00px;font-size:11.5px;font-weight:normal;color:#242424;font-family:'Liberation Sans';transform:scaleX(1.0160);">Adobe Acrobat</div>
<div class="t" style="left:1267.00px;top:122.00px;font-size:12px;font-weight:normal;color:#242424;font-family:'Liberation Sans';transform:scaleX(1.0500);">Add-ins</div>
<div class="t" style="left:1268.40px;top:163.00px;font-size:11.5px;font-weight:normal;color:#242424;font-family:'Liberation Sans';transform:scaleX(1.0103);">Add-ins</div>
<div class="t" style="left:11.43px;top:712.00px;font-size:11.5px;font-weight:normal;color:#424242;font-family:'Liberation Sans';transform:scaleX(0.9686);">Page 61 of 61</div>
<div class="t" style="left:100.01px;top:712.00px;font-size:11.5px;font-weight:normal;color:#424242;font-family:'Liberation Sans';transform:scaleX(0.9891);">14618 words</div>
<div class="t" style="left:183.61px;top:712.00px;font-size:11.5px;font-weight:normal;color:#424242;font-family:'Liberation Sans';transform:scaleX(0.9897);">English (United States)</div>
<div class="t" style="left:337.60px;top:712.00px;font-size:11.5px;font-weight:bold;color:#242424;font-family:'Liberation Sans';transform:scaleX(0.9124);">Accessibility: Investigate</div>
<div class="t" style="left:1023.63px;top:712.00px;font-size:11.5px;font-weight:normal;color:#242424;font-family:'Liberation Sans';transform:scaleX(0.9667);">Focus</div>
<div class="t" style="left:1330.88px;top:712.00px;font-size:11.5px;font-weight:normal;color:#424242;font-family:'Liberation Sans';transform:scaleX(0.9250);">100%</div>
<div class="t" style="left:88.20px;top:741.00px;font-size:15px;font-weight:normal;color:#2b2b2b;font-family:'Liberation Sans';transform:scaleX(0.9629);">Type here to search</div>
<div class="t" style="left:1053.94px;top:743.00px;font-size:13px;font-weight:normal;color:#ffffff;font-family:'Liberation Sans';transform:scaleX(1.0583);">-2°C</div>
<div class="t" style="left:1215.24px;top:742.00px;font-size:12.5px;font-weight:normal;color:#ffffff;font-family:'Liberation Sans';transform:scaleX(1.0556);">МОН</div>
<div class="t" style="left:1257.92px;top:733.00px;font-size:12.5px;font-weight:normal;color:#ffffff;font-family:'Liberation Sans';transform:scaleX(0.9773);">2:46 AM</div>
<div class="t" style="left:1251.86px;top:750.00px;font-size:12.5px;font-weight:normal;color:#ffffff;font-family:'Liberation Sans';transform:scaleX(0.9377);">10/28/2025</div>
<div class="t" style="left:345.10px;top:219.00px;font-size:32px;font-weight:bold;color:#000;font-family:'Liberation Serif';">11 сарын сургалтын төлөвлөгөө (Бэлтгэл бүлэг – 5</div>
<div class="t" style="left:581.00px;top:257.00px;font-size:32px;font-weight:bold;color:#000;font-family:'Liberation Serif';">настай хүүхэд)</div>
<div class="t" style="left:288.99px;top:315.00px;font-size:24px;font-weight:bold;color:#000;font-family:'Liberation Serif';transform:scaleX(1.0059);">11 дүгээр сарын хичээлийн сэдэв</div>
<div class="t" style="left:253.49px;top:362.00px;font-size:16px;font-weight:normal;color:#000;font-family:'Liberation Serif';transform:scaleX(1.0067);"><b>Ерөнхий сэдэв:</b> Ажил, мэргэжил</div>
<div class="t" style="left:253.50px;top:380.00px;font-size:16px;font-weight:normal;color:#000;font-family:'Liberation Serif';"><b>Бүлэг:</b> Бэлтгэл бүлэг (5 настай хүүхдүүд)</div>
<div class="t" style="left:282.68px;top:456.00px;font-size:18px;font-weight:bold;color:#000;font-family:'Liberation Serif';transform:scaleX(1.0187);">Зорилго</div>
<div class="t" style="left:252.99px;top:497.00px;font-size:16px;font-weight:normal;color:#000;font-family:'Liberation Serif';transform:scaleX(1.0071);">Хүүхэд ажил, мэргэжлийн утга учрыг ойлгож, хөдөлмөрийг хүндэтгэх, бусдад тусалдаг, хамтын ажиллагаатай байх хандлага</div>
<div class="t" style="left:254.00px;top:515.00px;font-size:16px;font-weight:normal;color:#000;font-family:'Liberation Serif';">төлөвшинө.</div>
<div class="t" style="left:301.10px;top:553.00px;font-size:16px;font-weight:normal;color:#000;font-family:'Liberation Serif';">Хүмүүсийн хийдэг ажлын төрлийг ялган нэрлэх.</div>
<div class="t" style="left:301.09px;top:571.00px;font-size:16px;font-weight:normal;color:#000;font-family:'Liberation Serif';transform:scaleX(1.0066);">Хөдөлмөрийн үр шим, үнэ цэнийг ойлгох.</div>
<div class="t" style="left:301.09px;top:589.00px;font-size:16px;font-weight:normal;color:#000;font-family:'Liberation Serif';transform:scaleX(1.0072);">Хамтран ажиллах, туслах, хуваарилж ажиллах дадал олгох.</div>
<div class="t" style="left:302.10px;top:607.00px;font-size:16px;font-weight:normal;color:#000;font-family:'Liberation Serif';transform:scaleX(1.0041);">Ажил мэргэжлийн багаж хэрэгслийг аюулгүй ашиглах, орчны ариун цэврийг сахих дадал төлөвшүүлэх.</div>
<div class="t" style="left:283.40px;top:684.00px;font-size:18px;font-weight:bold;color:#000;font-family:'Liberation Serif';transform:scaleX(0.9915);">Арга зүй</div>
</body></html>
